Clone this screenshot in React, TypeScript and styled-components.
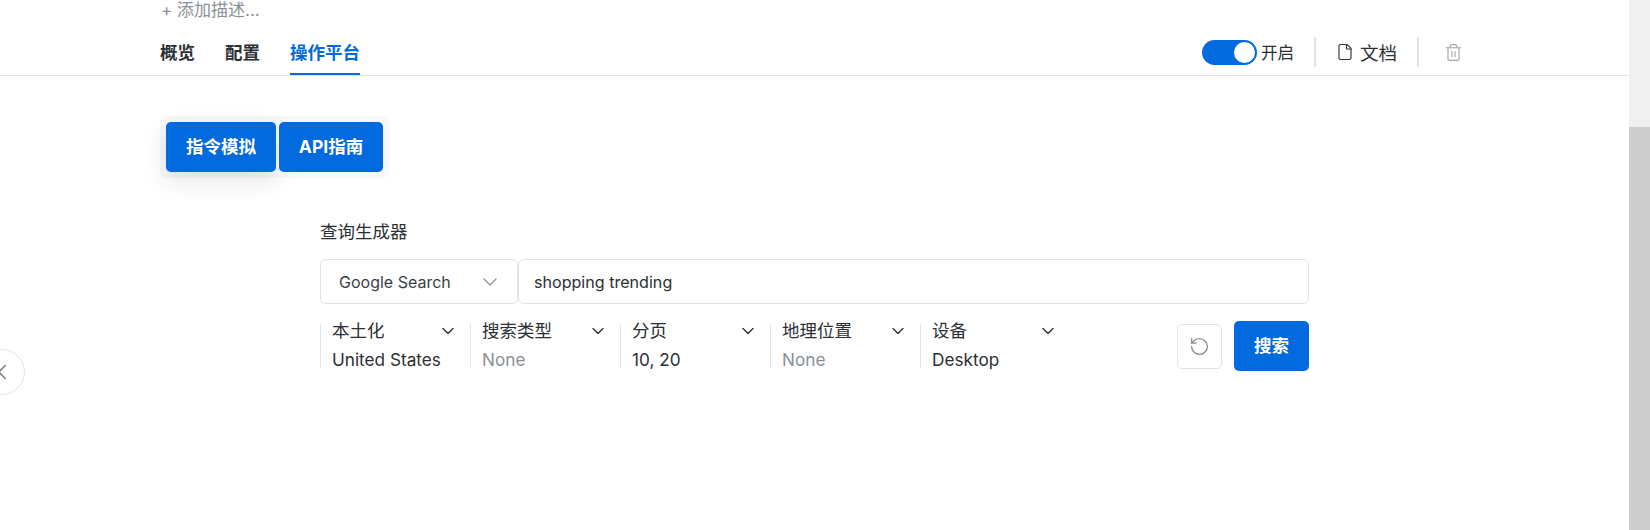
import { ChevronDown, File, RotateCcw, Trash2, ChevronLeft } from 'lucide-react';
import styled, { createGlobalStyle } from 'styled-components';

const cjk = '"Noto Sans CJK SC"';

const GlobalStyle = createGlobalStyle`
  html, body {
    margin: 0;
    padding: 0;
    height: 530px;
    overflow: hidden;
    background: #fff;
    font-family: Inter, ${cjk}, sans-serif;
    color: #2b2f33;
  }
  * { box-sizing: border-box; }
`;

const Page = styled.div`
  display: flex;
  width: 1650px;
  height: 530px;
  overflow: hidden;
  position: relative;
`;
const Main = styled.div`
  flex: 1;
  min-width: 0;
`;
const ScrollTrack = styled.div`
  width: 21px;
  height: 530px;
  background: #f0f0f0;
  padding-top: 127px;
`;
const ScrollThumb = styled.div`
  height: 403px;
  background: #cdcdcd;
`;

const Header = styled.header`
  height: 76px;
  padding: 0 0 0 160px;
  border-bottom: 1px solid #e1e3e6;
`;
const Describe = styled.div`
  height: 23px;
  font-size: 17px;
  line-height: 21px;
  color: #8a9097;
  padding-left: 1px;
  white-space: nowrap;
`;
const TabRow = styled.div`
  display: flex;
  justify-content: space-between;
  height: 52px;
`;
const Tabs = styled.nav`
  display: flex;
  gap: 30px;
`;
const Tab = styled.div<{ $active?: boolean }>`
  height: 52px;
  padding-top: 17px;
  font-size: 17.5px;
  line-height: 26px;
  font-weight: 700;
  color: ${(p) => (p.$active ? '#006ade' : '#2b2f33')};
  border-bottom: 2px solid ${(p) => (p.$active ? '#006ade' : 'transparent')};
`;
const Actions = styled.div`
  display: flex;
  align-items: center;
  padding-right: 166px;
  height: 52px;
  padding-top: 6px;
`;
const Toggle = styled.div`
  width: 55px;
  height: 25px;
  border-radius: 13px;
  background: #006ade;
  display: flex;
  justify-content: flex-end;
  align-items: center;
  padding-right: 2px;
  margin-right: 4px;
`;
const Knob = styled.div`
  width: 21px;
  height: 21px;
  border-radius: 50%;
  background: #fff;
`;
const ToggleText = styled.span`
  font-size: 16.5px;
  width: 33px;
  white-space: nowrap;
`;
const Divider = styled.div<{ $ml: number; $mr: number }>`
  width: 2px;
  height: 30px;
  background: #e1e3e6;
  margin-left: ${(p) => p.$ml}px;
  margin-right: ${(p) => p.$mr}px;
`;
const DocLink = styled.div`
  display: flex;
  align-items: center;
  gap: 6px;
  font-size: 18.5px;
  white-space: nowrap;
`;
const TrashIcon = styled(Trash2)`
  color: #a3a8ae;
`;

const Content = styled.main`
  padding: 40px 0 0 160px;
`;
const TabButtons = styled.div`
  display: inline-flex;
  gap: 3px;
  padding: 6px;
  background: #f6f8fa;
  border-radius: 6px;
`;
const BlueButton = styled.button<{ $w: number; $h: number; $raised?: boolean }>`
  width: ${(p) => p.$w}px;
  height: ${(p) => p.$h}px;
  border: 0;
  border-radius: 5px;
  padding: 0 0 3px;
  background: #006ade;
  color: #fff;
  font-family: Inter, ${cjk}, sans-serif;
  font-size: 17.5px;
  font-weight: 700;
  position: relative;
  box-shadow: ${(p) => (p.$raised ? '0 8px 24px rgba(40, 50, 60, 0.13)' : 'none')};
`;

const Builder = styled.section`
  width: 989px;
  margin: 41px 0 0 320px;
`;
const BuilderTitle = styled.div`
  font-size: 17.5px;
  line-height: 26px;
  margin-bottom: 14px;
`;
const QueryRow = styled.div`
  display: flex;
  height: 45px;
`;
const EngineSelect = styled.div`
  width: 198px;
  border: 1px solid #e1e3e6;
  border-radius: 6px;
  display: flex;
  align-items: center;
  justify-content: space-between;
  padding: 0 15px 0 18px;
  font-size: 16px;
  color: #3a3f45;
`;
const EngineChevron = styled(ChevronDown)`
  color: #8a9097;
`;
const QueryInput = styled.div`
  flex: 1;
  border: 1px solid #e1e3e6;
  border-radius: 6px;
  display: flex;
  align-items: center;
  padding-left: 15px;
  font-size: 16.1px;
  color: #2b2f33;
`;
const FilterRow = styled.div`
  display: flex;
  align-items: center;
  justify-content: space-between;
  margin-top: 17px;
`;
const Filters = styled.div`
  display: flex;
`;
const Filter = styled.div`
  width: 150px;
  height: 44px;
  border-left: 1px solid #e1e3e6;
  padding: 0 12px 0 11px;
`;
const FilterHead = styled.div`
  display: flex;
  align-items: center;
  justify-content: space-between;
  height: 20px;
  margin-top: -3px;
  font-size: 17.5px;
  line-height: 20px;
  color: #2b2f33;
`;
const FilterValue = styled.div<{ $empty?: boolean }>`
  margin-top: 9px;
  font-family: Inter, ${cjk}, sans-serif;
  font-size: 17.2px;
  line-height: 20px;
  white-space: nowrap;
  color: ${(p) => (p.$empty ? '#8a9097' : '#2b2f33')};
`;
const FilterActions = styled.div`
  display: flex;
  align-items: center;
  gap: 12px;
`;
const ResetButton = styled.div`
  width: 45px;
  height: 45px;
  border: 1px solid #e1e3e6;
  border-radius: 5px;
  display: flex;
  align-items: center;
  justify-content: center;
  color: #8a9097;
`;
const BackCircle = styled.div`
  position: absolute;
  left: -21px;
  top: 349px;
  width: 46px;
  height: 46px;
  border-radius: 50%;
  background: #fff;
  border: 1px solid #e1e3e6;
  display: flex;
  align-items: center;
  justify-content: center;
  color: #7d848b;
`;

const filters = [
  { label: '本土化', value: 'United States' },
  { label: '搜索类型', value: 'None', empty: true },
  { label: '分页', value: '10, 20' },
  { label: '地理位置', value: 'None', empty: true },
  { label: '设备', value: 'Desktop' },
];

export default function App() {
  return (
    <Page>
      <GlobalStyle />
      <Main>
        <Header>
          <Describe>+ 添加描述...</Describe>
          <TabRow>
            <Tabs>
              <Tab>概览</Tab>
              <Tab>配置</Tab>
              <Tab $active>操作平台</Tab>
            </Tabs>
            <Actions>
              <Toggle>
                <Knob />
              </Toggle>
              <ToggleText>开启</ToggleText>
              <Divider $ml={20} $mr={20} />
              <DocLink>
                <File size={18} strokeWidth={1.5} />
                文档
              </DocLink>
              <Divider $ml={20} $mr={25} />
              <TrashIcon size={19} strokeWidth={1.5} />
            </Actions>
          </TabRow>
        </Header>
        <Content>
          <TabButtons>
            <BlueButton $w={110} $h={50} $raised>指令模拟</BlueButton>
            <BlueButton $w={104} $h={50}>API指南</BlueButton>
          </TabButtons>
        </Content>
        <Builder>
          <BuilderTitle>查询生成器</BuilderTitle>
          <QueryRow>
            <EngineSelect>
              Google Search
              <EngineChevron size={24} strokeWidth={1.3} />
            </EngineSelect>
            <QueryInput>shopping trending</QueryInput>
          </QueryRow>
          <FilterRow>
            <Filters>
              {filters.map((f) => (
                <Filter key={f.label}>
                  <FilterHead>
                    {f.label}
                    <ChevronDown size={20} strokeWidth={1.6} />
                  </FilterHead>
                  <FilterValue $empty={f.empty}>{f.value}</FilterValue>
                </Filter>
              ))}
            </Filters>
            <FilterActions>
              <ResetButton>
                <RotateCcw size={21} strokeWidth={1.6} />
              </ResetButton>
              <BlueButton $w={75} $h={50}>搜索</BlueButton>
            </FilterActions>
          </FilterRow>
        </Builder>
      </Main>
      <ScrollTrack>
        <ScrollThumb />
      </ScrollTrack>
      <BackCircle>
        <ChevronLeft size={26} strokeWidth={1.5} />
      </BackCircle>
    </Page>
  );
}
